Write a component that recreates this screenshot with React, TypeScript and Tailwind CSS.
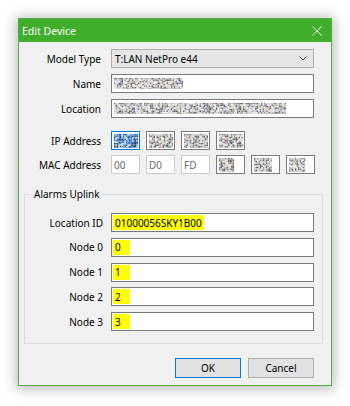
import React from "react";

function rng(seed: number) {
  let s = seed >>> 0;
  return () => {
    s = (s * 1664525 + 1013904223) >>> 0;
    return s / 4294967296;
  };
}

function Noise({ w, h, seed, mode = "gray", cell = 1.5 }: { w: number; h: number; seed: number; mode?: "gray" | "blue"; cell?: number }) {
  const r = rng(seed);
  const rects: React.ReactNode[] = [];
  const cols = Math.ceil(w / cell);
  const rows = Math.ceil(h / cell);
  for (let y = 0; y < rows; y++) {
    for (let x = 0; x < cols; x++) {
      const v = r();
      let fill: string;
      if (mode === "blue") {
        if (v < 0.45) fill = `rgb(${40 + Math.floor(r() * 40)},${100 + Math.floor(r() * 50)},${180 + Math.floor(r() * 50)})`;
        else if (v < 0.7) fill = `rgb(${30 + Math.floor(r() * 40)},${50 + Math.floor(r() * 40)},${90 + Math.floor(r() * 50)})`;
        else fill = `rgb(${170 + Math.floor(r() * 50)},${200 + Math.floor(r() * 40)},${235 + Math.floor(r() * 20)})`;
      } else {
        if (v < 0.1) {
          const t = r();
          fill = t < 0.5 ? `rgb(${80 + Math.floor(r() * 60)},${100 + Math.floor(r() * 60)},${160 + Math.floor(r() * 60)})` : `rgb(${160 + Math.floor(r() * 60)},${120 + Math.floor(r() * 50)},${90 + Math.floor(r() * 40)})`;
        } else if (v < 0.4) {
          const g = 90 + Math.floor(r() * 60);
          fill = `rgb(${g},${g},${g})`;
        } else {
          const g = 185 + Math.floor(r() * 60);
          fill = `rgb(${g},${g},${g})`;
        }
      }
      rects.push(<rect key={`${x}-${y}`} x={x * cell} y={y * cell} width={cell} height={cell} fill={fill} />);
    }
  }
  const fid = `blur${seed}`;
  return (
    <svg width={w} height={h} className="block shrink-0">
      <defs>
        <filter id={fid} x="0" y="0" width="100%" height="100%">
          <feGaussianBlur stdDeviation="0.45" />
        </filter>
      </defs>
      <g filter={`url(#${fid})`}>{rects}</g>
    </svg>
  );
}

function Label({ children, w }: { children: React.ReactNode; w: string }) {
  return <div className={`${w} text-right shrink-0`}>{children}</div>;
}

function Box({ children, cls = "" }: { children?: React.ReactNode; cls?: string }) {
  return <div className={`w-[29px] h-[19px] bg-white border flex items-center pl-[2px] ${cls}`}>{children}</div>;
}

export default function App() {
  return (
    <div
      className="w-[350px] h-[406px] bg-white pt-[18px] pl-[18px] text-black"
      style={{ fontFamily: '"Noto Sans", "Open Sans", sans-serif' }}
    >
      <div className="w-[314px] h-[368px] border border-[#52b043] bg-[#f0f0f0] shadow-[0_1px_12px_2px_rgba(0,0,0,0.28)] flex flex-col text-[10px] leading-[14px]">
        {/* Title bar */}
        <div className="h-[23px] bg-[#3fae2a] flex items-center justify-between pl-[3px] pr-[9px] shrink-0">
          <span className="text-white text-[10.5px]">Edit Device</span>
          <svg width="10" height="10" viewBox="0 0 10 10">
            <path d="M0.5 0.5 L9.5 9.5 M9.5 0.5 L0.5 9.5" stroke="#ffffff" strokeWidth="1" />
          </svg>
        </div>

        {/* Body */}
        <div className="flex flex-col pt-[7px]">
          <div className="flex items-center">
            <Label w="w-[82px]">Model Type</Label>
            <div className="ml-[10px] w-[203px] h-[19px] bg-[#e5e5e5] border border-[#acacac] flex items-center justify-between pl-[3px] pr-[6px]">
              <span>T:LAN NetPro e44</span>
              <svg width="8" height="5" viewBox="0 0 8 5">
                <path d="M0.5 0.5 L4 4 L7.5 0.5" stroke="#404040" strokeWidth="1" fill="none" />
              </svg>
            </div>
          </div>

          <div className="flex items-center mt-[6px]">
            <Label w="w-[82px]">Name</Label>
            <div className="ml-[10px] w-[203px] h-[19px] bg-white border border-[#7a7a7a] flex items-center pl-[2px]">
              <Noise w={69} h={11} seed={11} />
            </div>
          </div>

          <div className="flex items-center mt-[6px]">
            <Label w="w-[82px]">Location</Label>
            <div className="ml-[10px] w-[203px] h-[19px] bg-white border border-[#7a7a7a] flex items-center pl-[2px]">
              <Noise w={172} h={11} seed={23} />
            </div>
          </div>

          <div className="flex items-center mt-[13px]">
            <Label w="w-[82px]">IP Address</Label>
            <div className="ml-[10px] flex gap-[6px]">
              <Box cls="border-[#0078d7]">
                <Noise w={24} h={14} seed={5} mode="blue" />
              </Box>
              <Box cls="border-[#7a7a7a]">
                <Noise w={24} h={14} seed={7} />
              </Box>
              <Box cls="border-[#7a7a7a]">
                <Noise w={24} h={14} seed={9} />
              </Box>
              <Box cls="border-[#7a7a7a]">
                <Noise w={24} h={14} seed={13} />
              </Box>
            </div>
          </div>

          <div className="flex items-center mt-[5px]">
            <Label w="w-[82px]">MAC Address</Label>
            <div className="ml-[10px] flex gap-[6px]">
              <Box cls="border-[#cccccc] text-[#6d6d6d]">00</Box>
              <Box cls="border-[#cccccc] text-[#6d6d6d]">D0</Box>
              <Box cls="border-[#cccccc] text-[#6d6d6d]">FD</Box>
              <Box cls="border-[#7a7a7a]">
                <Noise w={15} h={14} seed={17} />
              </Box>
              <Box cls="border-[#7a7a7a]">
                <Noise w={18} h={14} seed={19} />
              </Box>
              <Box cls="border-[#7a7a7a]">
                <Noise w={16} h={14} seed={29} />
              </Box>
            </div>
          </div>

          {/* Group box */}
          <fieldset className="mt-[13px] ml-[5px] w-[299px] border border-[#dcdcdc] pt-[12px] pb-[12px] flex flex-col gap-[5.75px]">
            <legend className="ml-[6px] px-[3px]">Alarms Uplink</legend>
            {[
              ["Location ID", "01000056SKY1B00"],
              ["Node 0", "0"],
              ["Node 1", "1"],
              ["Node 2", "2"],
              ["Node 3", "3"],
            ].map(([label, value], i) => (
              <div key={label} className="flex items-center">
                <Label w="w-[78px]">{label}</Label>
                <div className="ml-[8px] w-[203px] h-[19px] bg-white border border-[#7a7a7a] flex items-stretch py-[1px] pl-[1px]">
                  <span className={`bg-[#ffff00] pl-[2px] flex items-center ${i === 0 ? "pr-[2px]" : "w-[17px]"}`}>{value}</span>
                </div>
              </div>
            ))}
          </fieldset>

          {/* Buttons */}
          <div className="flex justify-end gap-[7px] mt-[14px] pr-[17px]">
            <button className="w-[66px] h-[20px] bg-[#e1e1e1] border border-[#0078d7] flex items-center justify-center">OK</button>
            <button className="w-[66px] h-[20px] bg-[#e1e1e1] border border-[#adadad] flex items-center justify-center">Cancel</button>
          </div>
        </div>
      </div>
    </div>
  );
}
